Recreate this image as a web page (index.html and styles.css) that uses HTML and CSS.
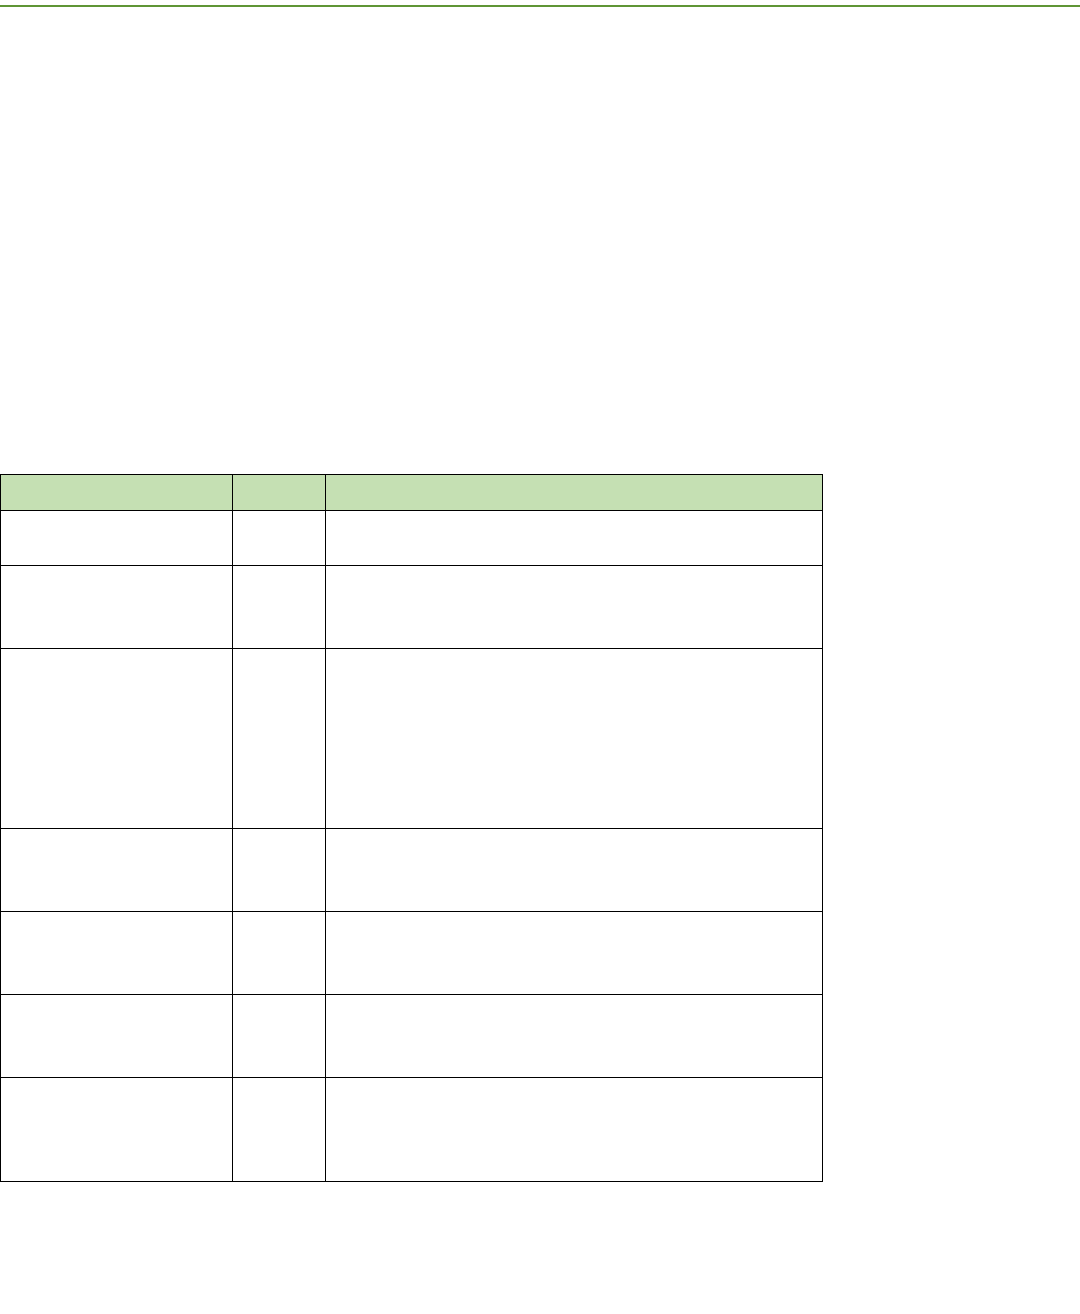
FILE: index.html
```html
<!DOCTYPE html>
<html>
<head>
<meta charset="utf-8">
<link rel="stylesheet" href="styles.css">
</head>
<body>
<div class="rule"></div>
<table class="grid">
  <colgroup>
    <col class="c1"><col class="c2"><col class="c3">
  </colgroup>
  <thead>
    <tr class="h36"><th></th><th></th><th></th></tr>
  </thead>
  <tbody>
    <tr class="h55"><td></td><td></td><td></td></tr>
    <tr class="h83"><td></td><td></td><td></td></tr>
    <tr class="h180"><td></td><td></td><td></td></tr>
    <tr class="h83"><td></td><td></td><td></td></tr>
    <tr class="h83"><td></td><td></td><td></td></tr>
    <tr class="h83"><td></td><td></td><td></td></tr>
    <tr class="h104"><td></td><td></td><td></td></tr>
  </tbody>
</table>
</body>
</html>
```

FILE: styles.css
```css
html, body {
  margin: 0;
  padding: 0;
  background: #ffffff;
  font-family: "Liberation Sans", Arial, sans-serif;
}
.rule {
  height: 2px;
  margin-top: 5px;
  background: #5f9535;
}
.grid {
  margin-top: 467px;
  border-collapse: collapse;
  table-layout: fixed;
  width: 822px;
}
.c1 { width: 232px; }
.c2 { width: 93px; }
.c3 { width: 497px; }
.grid th, .grid td {
  border: 1px solid #000000;
  padding: 0;
}
.grid th {
  background: #c5e0b3;
}
.h36 { height: 36px; }
.h55 { height: 55px; }
.h83 { height: 83px; }
.h180 { height: 180px; }
.h104 { height: 104px; }
```
